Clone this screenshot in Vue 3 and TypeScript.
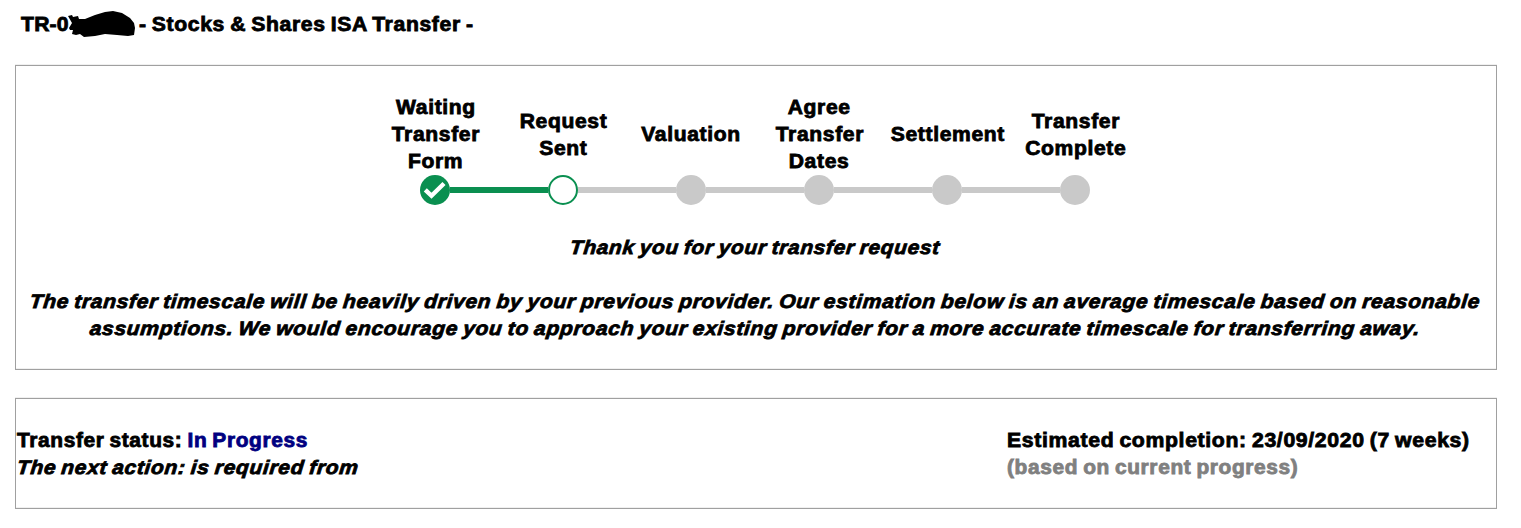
<script setup lang="ts">
type StepState = 'done' | 'current' | 'pending'
interface Step { lines: string[]; state: StepState }

const steps: Step[] = [
  { lines: ['Waiting', 'Transfer', 'Form'], state: 'done' },
  { lines: ['Request', 'Sent'], state: 'current' },
  { lines: ['Valuation'], state: 'pending' },
  { lines: ['Agree', 'Transfer', 'Dates'], state: 'pending' },
  { lines: ['Settlement'], state: 'pending' },
  { lines: ['Transfer', 'Complete'], state: 'pending' },
]
</script>

<template>
  <main class="page">
    <h1 class="title">
      <span class="reference">TR-0</span>
      <svg class="scribble" width="68" height="28" viewBox="0 0 68 28" aria-hidden="true">
        <path d="M0 5 L4 4 5 6 10 5 11 8 17 8 27 4 37 1 45 0 54 2 62 7 66 12 67 17 66 24 60 25 49 24 37 23 27 25 16 26 12 23 8 24 4 23 5 19 2 19 1 17 4 12Z" />
      </svg>
      <span class="product">- Stocks &amp; Shares ISA Transfer -</span>
    </h1>

    <section class="panel tracker">
      <ol class="steps">
        <li v-for="(step, i) in steps" :key="i" class="step" :class="step.state">
          <div class="label">
            <span v-for="line in step.lines" :key="line">{{ line }}</span>
          </div>
          <div class="rail">
            <i class="bar" />
            <svg class="dot" width="30" height="30" viewBox="0 0 30 30">
              <circle v-if="step.state === 'current'" cx="15" cy="15" r="14" fill="#fff" stroke="#0a8f50" stroke-width="2" />
              <circle v-else cx="15" cy="15" r="15" :fill="step.state === 'done' ? '#0a8f50' : '#c9c9c9'" />
              <path v-if="step.state === 'done'" d="M5.3 14.8 L11.5 20.8 L24 8.5" fill="none" stroke="#fff" stroke-width="4.4" />
            </svg>
            <i class="bar" />
          </div>
        </li>
      </ol>
      <p class="thanks"><span>Thank you for your transfer request</span></p>
      <p class="notice">
        <span class="first">The transfer timescale will be heavily driven by your previous provider. Our estimation below is an average timescale based on reasonable</span>
        <span class="second">assumptions. We would encourage you to approach your existing provider for a more accurate timescale for transferring away.</span>
      </p>
    </section>

    <section class="panel summary">
      <div class="status">
        <div class="status-line">Transfer status: <span class="progress">In Progress</span></div>
        <div class="action">The next action: is required from</div>
      </div>
      <div class="estimate">
        <div class="completion">Estimated completion: 23/09/2020 (7 weeks)</div>
        <div class="basis">(based on current progress)</div>
      </div>
    </section>
  </main>
</template>

<style>
html, body { background: #fff; }
</style>

<style scoped>
.page {
  box-sizing: border-box;
  width: 1521px;
  height: 528px;
  padding: 10px 24px 0 15px;
  overflow: hidden;
  font: 700 19.5px/27px "Liberation Sans", Arial, sans-serif;
  letter-spacing: 0.6px;
  word-spacing: -1.3px;
  color: #000;
  -webkit-text-stroke: 0.8px currentColor;
  white-space: nowrap;
}
.title {
  display: flex;
  height: 27px;
  margin: 0 0 28px 6px;
  font: inherit;
}
.reference, .product { padding-top: 1px; transform: scaleX(1.084); transform-origin: left; }
.reference { width: 47px; letter-spacing: 0.2px; }
.scribble { width: 68px; margin-top: 1px; }
.product { margin-left: 3px; }
.panel {
  box-sizing: border-box;
  width: 1482px;
  border: 1px solid #a0a0a0;
  box-shadow: 0 -1px 0 #f0f0f0, inset 0 -1px 0 #f0f0f0;
}
.tracker { height: 305px; padding-top: 28px; }
.steps {
  display: flex;
  margin: 0 0 0 355px;
  padding: 0;
  list-style: none;
}
.step { width: 128px; }
.label {
  display: flex;
  flex-direction: column;
  justify-content: center;
  align-items: center;
  height: 81px;
  padding-left: 1px;
}
.label span { transform: scaleX(1.08); }
.rail { display: flex; align-items: center; height: 30px; }
.dot { flex: none; }
.bar { flex: 1; height: 6px; background: #c9c9c9; }
.done .bar, .current .bar:first-child { background: #0a8f50; }
.step:first-child .bar:first-child, .step:last-child .bar:last-child { background: transparent; }
.thanks, .notice { margin: 0 2px 0 0; text-align: center; font-style: italic; }
.thanks { margin-top: 29px; }
.thanks span { display: block; transform: scaleX(1.072) skewX(-5deg); }
.notice { margin-top: 27px; }
.notice span { display: block; transform: scaleX(1.082) skewX(-5deg); }
.summary { display: flex; height: 111px; margin-top: 28px; padding: 28px 0 0 1px; }
.status { width: 990px; }
.status-line, .action, .completion, .basis {
  width: max-content;
  transform: scaleX(1.07);
  transform-origin: left;
}
.progress { color: #000080; }
.action { font-style: italic; transform: scaleX(1.079) skewX(-5deg); }
.completion { transform: scaleX(1.088); }
.basis { color: #808080; }
</style>
